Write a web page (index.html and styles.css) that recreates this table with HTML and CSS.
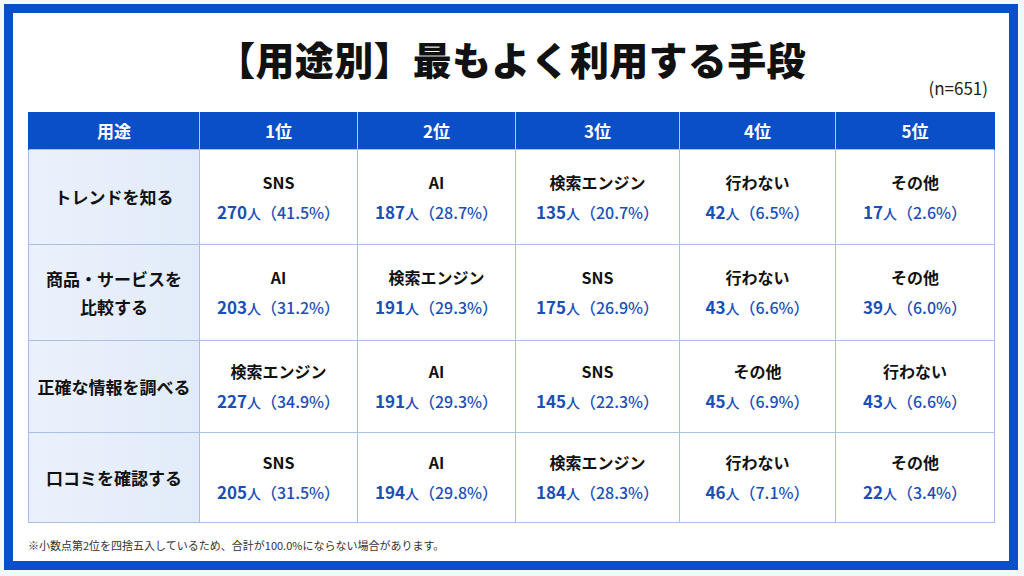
FILE: index.html
```html
<!DOCTYPE html>
<html lang="ja">
<head>
<meta charset="utf-8">
<title>用途別 最もよく利用する手段</title>
<link rel="stylesheet" href="styles.css">
</head>
<body>
<div class="frame">
  <h1 class="title">【用途別】最もよく利用する手段</h1>
  <div class="sample">(n=651)</div>
  <table class="rank">
    <colgroup>
      <col class="c0"><col class="c1"><col class="c2"><col class="c3"><col class="c4"><col class="c5">
    </colgroup>
    <thead>
      <tr><th>用途</th><th>1位</th><th>2位</th><th>3位</th><th>4位</th><th>5位</th></tr>
    </thead>
    <tbody>
      <tr class="r1">
        <th class="label">トレンドを知る</th>
        <td><div class="name">SNS</div><div class="val"><b>270</b><span class="p">人</span>（41.5%）</div></td>
        <td><div class="name">AI</div><div class="val"><b>187</b><span class="p">人</span>（28.7%）</div></td>
        <td><div class="name">検索エンジン</div><div class="val"><b>135</b><span class="p">人</span>（20.7%）</div></td>
        <td><div class="name">行わない</div><div class="val"><b>42</b><span class="p">人</span>（6.5%）</div></td>
        <td><div class="name">その他</div><div class="val"><b>17</b><span class="p">人</span>（2.6%）</div></td>
      </tr>
      <tr class="r2">
        <th class="label">商品・サービスを<br>比較する</th>
        <td><div class="name">AI</div><div class="val"><b>203</b><span class="p">人</span>（31.2%）</div></td>
        <td><div class="name">検索エンジン</div><div class="val"><b>191</b><span class="p">人</span>（29.3%）</div></td>
        <td><div class="name">SNS</div><div class="val"><b>175</b><span class="p">人</span>（26.9%）</div></td>
        <td><div class="name">行わない</div><div class="val"><b>43</b><span class="p">人</span>（6.6%）</div></td>
        <td><div class="name">その他</div><div class="val"><b>39</b><span class="p">人</span>（6.0%）</div></td>
      </tr>
      <tr class="r3">
        <th class="label">正確な情報を調べる</th>
        <td><div class="name">検索エンジン</div><div class="val"><b>227</b><span class="p">人</span>（34.9%）</div></td>
        <td><div class="name">AI</div><div class="val"><b>191</b><span class="p">人</span>（29.3%）</div></td>
        <td><div class="name">SNS</div><div class="val"><b>145</b><span class="p">人</span>（22.3%）</div></td>
        <td><div class="name">その他</div><div class="val"><b>45</b><span class="p">人</span>（6.9%）</div></td>
        <td><div class="name">行わない</div><div class="val"><b>43</b><span class="p">人</span>（6.6%）</div></td>
      </tr>
      <tr class="r4">
        <th class="label">口コミを確認する</th>
        <td><div class="name">SNS</div><div class="val"><b>205</b><span class="p">人</span>（31.5%）</div></td>
        <td><div class="name">AI</div><div class="val"><b>194</b><span class="p">人</span>（29.8%）</div></td>
        <td><div class="name">検索エンジン</div><div class="val"><b>184</b><span class="p">人</span>（28.3%）</div></td>
        <td><div class="name">行わない</div><div class="val"><b>46</b><span class="p">人</span>（7.1%）</div></td>
        <td><div class="name">その他</div><div class="val"><b>22</b><span class="p">人</span>（3.4%）</div></td>
      </tr>
    </tbody>
  </table>
  <p class="note">※小数点第2位を四捨五入しているため、合計が100.0%にならない場合があります。</p>
</div>
</body>
</html>
```
FILE: styles.css
```css
html, body {
  margin: 0;
  padding: 0;
}
body {
  width: 1024px;
  height: 576px;
  background: #f3f6fb;
  font-family: "Noto Sans CJK JP", "Noto Sans", sans-serif;
  color: #111;
  overflow: hidden;
}
.frame {
  box-sizing: border-box;
  margin: 4px 6px 0 4px;
  height: 566px;
  border: 9px solid #0a4fc7;
  background: #fff;
  padding: 21px 15px 0 15px;
  display: flex;
  flex-direction: column;
}
.title {
  margin: 0;
  font-size: 39px;
  line-height: 48px;
  font-weight: 900;
  text-align: center;
  letter-spacing: 0.3px;
  color: #111;
}
.sample {
  margin-top: -4px;
  text-align: right;
  font-size: 17px;
  line-height: 20px;
  padding-right: 6px;
  color: #222;
}
.rank {
  margin-top: 14px;
  border-collapse: collapse;
  table-layout: fixed;
  width: 966px;
}
.c0 { width: 171px; }
.c1 { width: 158px; }
.c2 { width: 158px; }
.c3 { width: 164px; }
.c4 { width: 156px; }
.c5 { width: 159px; }
.rank thead th {
  background: #0a4fc7;
  color: #fff;
  font-size: 17px;
  font-weight: 700;
  height: 37px;
  padding: 0;
  border-left: 1px solid #b6c9ec;
  border-right: 1px solid #b6c9ec;
  line-height: 20px;
}
.rank thead th:first-child { border-left-color: #0a4fc7; }
.rank thead th:last-child { border-right-color: #0a4fc7; }
.rank tbody th,
.rank tbody td {
  border: 1px solid #a9bfe6;
  text-align: center;
  vertical-align: middle;
  padding: 0;
}
.r1 > * { height: 94px; }
.r2 > * { height: 95px; }
.r3 > * { height: 91px; }
.r4 > * { height: 89px; }
.label {
  background: linear-gradient(90deg, #eaf1fc, #e2ebf9);
  font-size: 17px;
  font-weight: 700;
  line-height: 28px;
  color: #111;
}
.name {
  font-size: 16px;
  font-weight: 700;
  line-height: 22px;
  color: #111;
}
.val {
  margin-top: 8px;
  font-size: 16px;
  line-height: 22px;
  font-weight: 500;
  color: #1a4fb7;
  white-space: nowrap;
}
.val b {
  font-size: 17px;
  font-weight: 700;
}
.val .p {
  font-size: 14px;
}
.note {
  margin: 15px 0 0 0;
  font-size: 11px;
  line-height: 14px;
  color: #333;
}
```
